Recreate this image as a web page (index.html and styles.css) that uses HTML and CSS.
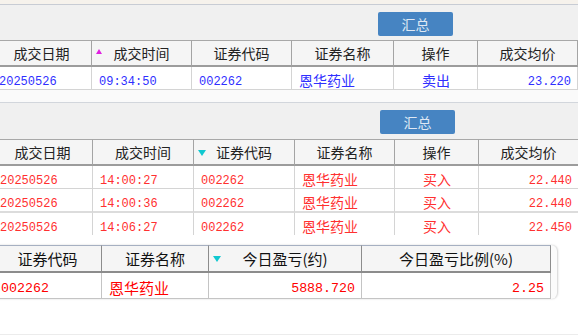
FILE: index.html
```html
<!DOCTYPE html>
<html>
<head>
<meta charset="utf-8">
<link rel="stylesheet" href="styles.css">
</head>
<body>
<div class="top"></div>
<div class="bar"><button class="btn">汇总</button></div>
<div class="tbl t1 blue">
  <div class="hc">成交日期</div>
  <div class="hc"><span class="tri-up"></span>成交时间</div>
  <div class="hc">证券代码</div>
  <div class="hc">证券名称</div>
  <div class="hc">操作</div>
  <div class="hc">成交均价</div>
  <div class="dc n">20250526</div>
  <div class="dc n">09:34:50</div>
  <div class="dc n">002262</div>
  <div class="dc">恩华药业</div>
  <div class="dc c">卖出</div>
  <div class="dc n r">23.220</div>
</div>
<div class="gap"></div>
<div class="bar bar2"><button class="btn">汇总</button></div>
<div class="tbl t2 red">
  <div class="hc">成交日期</div>
  <div class="hc">成交时间</div>
  <div class="hc"><span class="tri-dn"></span>证券代码</div>
  <div class="hc">证券名称</div>
  <div class="hc">操作</div>
  <div class="hc">成交均价</div>

  <div class="dc n">20250526</div>
  <div class="dc n">14:00:27</div>
  <div class="dc n">002262</div>
  <div class="dc">恩华药业</div>
  <div class="dc c">买入</div>
  <div class="dc n r">22.440</div>

  <div class="dc n row2">20250526</div>
  <div class="dc n row2">14:00:36</div>
  <div class="dc n row2">002262</div>
  <div class="dc row2">恩华药业</div>
  <div class="dc c row2">买入</div>
  <div class="dc n r row2">22.440</div>

  <div class="dc n last">20250526</div>
  <div class="dc n last">14:06:27</div>
  <div class="dc n last">002262</div>
  <div class="dc last">恩华药业</div>
  <div class="dc c last">买入</div>
  <div class="dc n r last">22.450</div>
</div>
<div class="gap2"></div>
<div class="pop">
  <div class="tbl t3">
    <div class="hc">证券代码</div>
    <div class="hc">证券名称</div>
    <div class="hc"><span class="tri-dn tri3"></span>今日盈亏(约)</div>
    <div class="hc">今日盈亏比例(%)</div>
    <div class="dc n">002262</div>
    <div class="dc">恩华药业</div>
    <div class="dc n r">5888.720</div>
    <div class="dc n r">2.25</div>
  </div>
</div>
<div class="rest"></div>
</body>
</html>
```

FILE: styles.css
```css
body {
  margin: 0;
  width: 578px;
  height: 336px;
  overflow: hidden;
  background: #ffffff;
  font-family: "Noto Sans CJK SC", sans-serif;
}
.top {
  height: 4px;
  background: #f6f2ec;
  border-bottom: 1px solid #c8ccd4;
}
.bar {
  height: 35px;
  box-sizing: border-box;
  background: #f0f0f0;
  padding: 7px 0 0 378px;
}
.bar2 {
  height: 36px;
  padding-left: 380px;
}
.btn {
  display: block;
  width: 75px;
  height: 24px;
  padding: 0;
  border: 0;
  border-radius: 2px;
  background: #4684c2;
  color: #dfe8f4;
  font-family: "Noto Sans CJK SC", sans-serif;
  font-size: 14px;
  line-height: 24px;
}
.tbl {
  display: grid;
  margin-left: -8px;
}
.t1 {
  grid-template-columns: 100px 100px 100px 102px 84px 100px;
}
.t2 {
  margin-left: -7px;
  grid-template-columns: 100px 101px 101px 100px 84px 100px;
}
.hc {
  position: relative;
  height: 24px;
  background: #f5f5f5;
  border-top: 1px solid #a8a8a8;
  border-bottom: 2px solid #9c9c9c;
  border-right: 1px solid #a4a4a4;
  display: flex;
  align-items: center;
  justify-content: center;
  font-size: 14px;
  color: #222222;
}
.dc {
  height: 18px;
  padding: 4px 6px 0 7px;
  border-bottom: 1px solid #d4d4d4;
  border-right: 1px solid #d4d4d4;
  display: flex;
  align-items: center;
  font-size: 14px;
  white-space: nowrap;
}
.dc.n {
  height: 14px;
  padding-top: 8px;
}
.dc.row2 {
  border-bottom: 2px solid #dcdcdc;
}
.dc.last {
  border-bottom: 0;
}
.n {
  font-family: "Liberation Mono", monospace;
  font-size: 12px;
}
.c {
  justify-content: center;
}
.r {
  justify-content: flex-end;
}
.blue .dc {
  color: #2f2fff;
}
.red .dc {
  color: #ff3030;
}
.tri-up {
  position: absolute;
  left: 4px;
  top: 8px;
  width: 0;
  height: 0;
  border-left: 3px solid transparent;
  border-right: 3px solid transparent;
  border-bottom: 5px solid #e020e0;
}
.tri-dn {
  position: absolute;
  left: 4px;
  top: 10px;
  width: 0;
  height: 0;
  border-left: 4px solid transparent;
  border-right: 4px solid transparent;
  border-top: 6px solid #10c8d0;
}
.gap {
  height: 12px;
  background: #fafafa;
  border-bottom: 1px solid #d2d6dc;
}
.gap2 {
  height: 10px;
  background: #ffffff;
}
.pop {
  width: 557px;
  margin-left: -6px;
  padding-right: 6px;
  background: #fbfbfb;
  border-radius: 0 6px 6px 0;
  box-shadow: 1px 0 2px rgba(0, 0, 0, 0.18);
}
.t3 {
  margin-left: 0;
  grid-template-columns: 108px 107px 153px 189px;
}
.t3 .hc {
  height: 25px;
  border-top: 1px solid #a6b0c2;
  border-bottom: 2px solid #8c8c8c;
  border-right: 1px solid #8c8c8c;
  font-size: 15px;
  color: #111111;
}
.t3 .dc {
  height: 21px;
  padding-top: 4px;
  background: #ffffff;
  border-bottom: 1px solid #c4c4c4;
  border-right: 1px solid #c4c4c4;
  color: #ff0000;
  font-size: 15px;
}
.t3 .dc.n {
  height: 19px;
  padding-top: 6px;
  font-size: 13.3px;
}
.t3 .tri3 {
  top: 10px;
}
.rest {
  height: 35px;
  border-bottom: 1px solid #ececec;
}
```
